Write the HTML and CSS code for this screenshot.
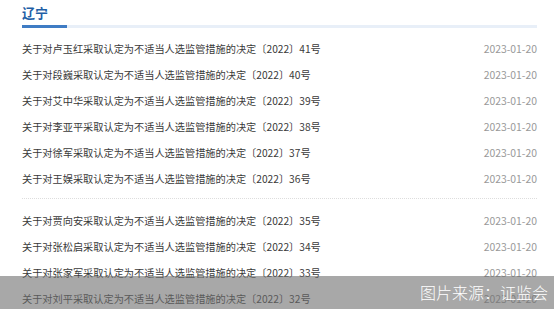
FILE: index.html
```html
<!DOCTYPE html>
<html lang="zh-CN">
<head>
    <meta charset="UTF-8">
    <meta name="viewport" content="width=device-width, initial-scale=1.0">
    <title>辽宁 - 监管措施</title>
    <link rel="stylesheet" href="styles.css">
</head>
<body>
    <div class="container">
        <h2 class="title">辽宁</h2>
        <div class="title-line"><span></span></div>
        <ul class="news-list">
            <li><a href="#">关于对卢玉红采取认定为不适当人选监管措施的决定〔2022〕41号</a><span class="date">2023-01-20</span></li>
            <li><a href="#">关于对段巍采取认定为不适当人选监管措施的决定〔2022〕40号</a><span class="date">2023-01-20</span></li>
            <li><a href="#">关于对艾中华采取认定为不适当人选监管措施的决定〔2022〕39号</a><span class="date">2023-01-20</span></li>
            <li><a href="#">关于对李亚平采取认定为不适当人选监管措施的决定〔2022〕38号</a><span class="date">2023-01-20</span></li>
            <li><a href="#">关于对徐军采取认定为不适当人选监管措施的决定〔2022〕37号</a><span class="date">2023-01-20</span></li>
            <li><a href="#">关于对王娱采取认定为不适当人选监管措施的决定〔2022〕36号</a><span class="date">2023-01-20</span></li>
        </ul>
        <div class="divider"></div>
        <ul class="news-list">
            <li><a href="#">关于对贾向安采取认定为不适当人选监管措施的决定〔2022〕35号</a><span class="date">2023-01-20</span></li>
            <li><a href="#">关于对张松启采取认定为不适当人选监管措施的决定〔2022〕34号</a><span class="date">2023-01-20</span></li>
            <li><a href="#">关于对张家军采取认定为不适当人选监管措施的决定〔2022〕33号</a><span class="date">2023-01-20</span></li>
            <li><a href="#">关于对刘平采取认定为不适当人选监管措施的决定〔2022〕32号</a><span class="date">2023-01-20</span></li>
        </ul>
    </div>
    <div class="caption">图片来源：证监会</div>
</body>
</html>
```

FILE: styles.css
```css
/* 页面基础样式 */
body {
    font-family: "Noto Sans CJK SC", "Noto Sans", sans-serif;
    background-color: #fff;
    color: #333;
    margin: 0;
    overflow: hidden;
}
.container {
    padding: 3px 17px 0 22px;
}
.title {
    margin: 0;
    font-size: 13px;
    line-height: 20px;
    font-weight: bold;
    color: #1f5fa6;
}
.title-line {
    margin-top: 2px;
    height: 3px;
    background-color: #e8eff8;
}
.title-line span {
    display: block;
    width: 45px;
    height: 3px;
    background-color: #3f7cc4;
}
.news-list {
    list-style: none;
    margin: 0;
    padding: 0;
}
.news-list:first-of-type {
    margin-top: 7px;
}
.news-list li {
    display: flex;
    justify-content: space-between;
    align-items: center;
    height: 26px;
    font-size: 10.2px;
}
.news-list a {
    color: #3a3a3a;
    text-decoration: none;
}
.date {
    color: #999;
    font-size: 10.4px;
}
.divider {
    margin: 7px 0 8px;
    border-top: 1px dotted #ddd;
}
.caption {
    position: absolute;
    left: 0;
    right: 0;
    bottom: 0;
    height: 33px;
    line-height: 33px;
    padding-right: 6px;
    text-align: right;
    font-size: 16px;
    font-weight: 300;
    color: #fff;
    background-color: rgba(110, 110, 110, 0.6);
}
```
